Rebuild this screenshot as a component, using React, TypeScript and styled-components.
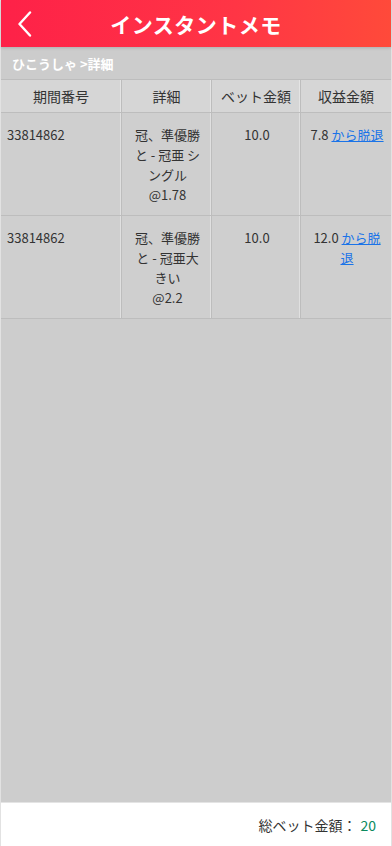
import styled, { createGlobalStyle } from "styled-components";

const GlobalStyle = createGlobalStyle`
  html, body {
    margin: 0;
    padding: 0;
    height: 100%;
  }
  body {
    font-family: "Noto Sans CJK JP", "Noto Sans", sans-serif;
  }
  #root {
    height: 100%;
  }
`

type Bet = {
  id: string;
  detail: string[];
  amount: string;
  win: string;
  link: string[];
}

const bets: Bet[] = [
  { id: "33814862", detail: ["冠、準優勝", "と - 冠亜 シ", "ングル", "@1.78"], amount: "10.0", win: "7.8", link: ["から脱退"] },
  { id: "33814862", detail: ["冠、準優勝", "と - 冠亜大", "きい", "@2.2"], amount: "10.0", win: "12.0", link: ["から脱", "退"] },
];

function App() {
  return <Page>
    <GlobalStyle />
    <Header>
      <BackButton>
        <svg width="16" height="26" viewBox="0 0 16 26" fill="none">
          <path d="M13 1.5 L2.5 13 L13 24.5" stroke="#fff" strokeWidth="2.4" strokeLinecap="round" strokeLinejoin="round" />
        </svg>
      </BackButton>
      <Title>インスタントメモ</Title>
    </Header>
    <Crumb>ひこうしゃ &gt;詳細</Crumb>
    <Table>
      <HeadCell>期間番号</HeadCell>
      <HeadCell>詳細</HeadCell>
      <HeadCell>ベット金額</HeadCell>
      <HeadCell $last>収益金額</HeadCell>
      {bets.map((b, i) => <Row key={i}>
        <Cell $align="left">{b.id}</Cell>
        <Cell>{b.detail.map((l, j) => <div key={j}>{l}</div>)}</Cell>
        <Cell>{b.amount}</Cell>
        <Cell $last>
          {b.win} <LinkText>{b.link[0]}</LinkText>
          {b.link[1] && <><br /><LinkText>{b.link[1]}</LinkText></>}
        </Cell>
      </Row>)}
    </Table>
    <Filler />
    <Footer>
      総ベット金額： <Total>20</Total>
    </Footer>
  </Page>
}

export default App;

const Page = styled.div`
  display: flex;
  flex-direction: column;
  height: 846px;
  background: #cdcdcd;
  border-left: 1px solid #e2e2e2;
  border-right: 1px solid #e2e2e2;
  box-sizing: border-box;
`

const Header = styled.div`
  position: relative;
  height: 47px;
  flex-shrink: 0;
  display: flex;
  align-items: center;
  justify-content: center;
  background: linear-gradient(90deg, #fe2148 0%, #ff3545 60%, #ff4a3a 100%);
  box-shadow: 0 1px 3px rgba(0,0,0,0.15);
`

const BackButton = styled.div`
  position: absolute;
  left: 16px;
  top: 11px;
  display: flex;
`

const Title = styled.div`
  color: #fff;
  font-size: 21px;
  font-weight: 700;
  letter-spacing: 0.5px;
`

const Crumb = styled.div`
  height: 32px;
  display: flex;
  align-items: center;
  padding-left: 11px;
  color: #fff;
  font-size: 13px;
  font-weight: 700;
  background: #cccccc;
`

const Table = styled.div`
  display: grid;
  grid-template-columns: 121px 90px 89px 1fr;
  border-top: 1px solid #bdbdbd;
`

const HeadCell = styled.div<{ $last?: boolean }>`
  height: 32px;
  display: flex;
  align-items: center;
  justify-content: center;
  background: #d6d6d6;
  color: #333;
  font-size: 14px;
  border-right: ${p => p.$last ? "none" : "1px solid #bdbdbd"};
  border-bottom: 1px solid #bdbdbd;
  box-shadow: ${p => p.$last ? "none" : "inset -1px 0 0 #e4e4e4"};
`

const Row = styled.div`
  display: contents;
`

const Cell = styled.div<{ $align?: string; $last?: boolean }>`
  height: 103px;
  box-sizing: border-box;
  padding: 12px 4px 0 6px;
  text-align: ${p => p.$align || "center"};
  color: #333;
  font-size: 13px;
  line-height: 20px;
  background: #cfcfcf;
  border-right: ${p => p.$last ? "none" : "1px solid #bdbdbd"};
  border-bottom: 1px solid #bdbdbd;
  box-shadow: ${p => p.$last ? "none" : "inset -1px 0 0 #e0e0e0"};
`

const LinkText = styled.a`
  color: #1a73e8;
  text-decoration: underline;
  cursor: pointer;
`

const Filler = styled.div`
  flex: 1;
  background: #cdcdcd;
`

const Footer = styled.div`
  height: 43px;
  flex-shrink: 0;
  display: flex;
  align-items: center;
  justify-content: flex-end;
  padding-right: 15px;
  background: #fff;
  border-top: 1px solid #e4e4e4;
  color: #333;
  font-size: 14px;
`

const Total = styled.span`
  color: #0b8a5e;
  margin-left: 4px;
`
